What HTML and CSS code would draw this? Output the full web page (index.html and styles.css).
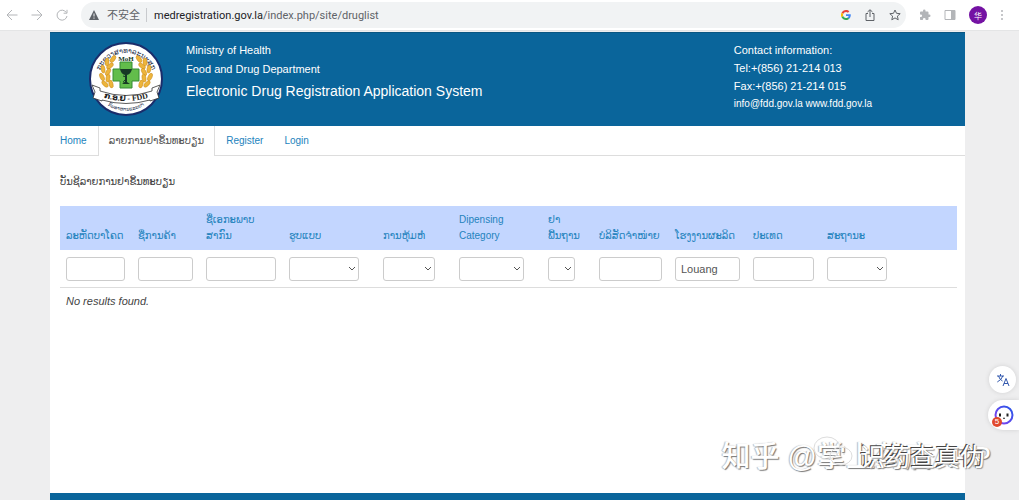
FILE: index.html
```html
<!DOCTYPE html>
<html lang="lo">
<head>
    <meta charset="UTF-8">
    <meta name="viewport" content="width=device-width, initial-scale=1.0">
    <title>ລາຍການຢາຂຶ້ນທະບຽນ</title>

    <link rel="stylesheet" href="styles.css">
</head>
<body>
    <div class="toolbar">
        <button class="tool" aria-label="Back"><svg width="12" height="12" viewBox="0 0 12 12"><path d="M11.500 6H1M6 1L1 6l5 5"/></svg></button>
        <button class="tool" aria-label="Forward"><svg width="12" height="12" viewBox="0 0 12 12"><path d="M.5 6H11M6 1l5 5-5 5"/></svg></button>
        <button class="tool" aria-label="Reload"><svg width="12" height="12" viewBox="0 0 12 12"><path d="M10.300 3.500A5 5 0 1 0 11 7M11 .8v3.400H7.600"/></svg></button>
        <div class="address">
            <svg class="warn" width="10" height="10" viewBox="0 0 10 10"><path d="M5 0l5 10H0z" fill="#5f6368"/><path d="M5 3.500v3M5 7.500v1.200" stroke="#f1f3f4"/></svg>
            <span class="unsafe" lang="zh">不安全</span>
            <span class="url"><b>medregistration.gov.la</b>/index.php/site/druglist</span>
            <svg class="google" width="10" height="10" viewBox="0 0 48 48">
                <path fill="#ea4335" d="M24 9.500c3.500 0 6.700 1.200 9.200 3.600l6.900-6.900C35.900 2.400 30.500 0 24 0 14.600 0 6.500 5.400 2.600 13.200l8 6.200C12.400 13.700 17.700 9.500 24 9.500z"/>
                <path fill="#4285f4" d="M47 24.500c0-1.600-.2-3.100-.4-4.500H24v9h12.900c-.6 3-2.300 5.500-4.700 7.200l7.700 6C44.400 38 47 31.800 47 24.500z"/>
                <path fill="#fbbc05" d="M10.500 28.600a14 14 0 0 1 0-9.200l-8-6.200a24 24 0 0 0 0 21.600z"/>
                <path fill="#34a853" d="M24 48c6.500 0 11.900-2.100 15.900-5.800l-7.700-6A14.500 14.500 0 0 1 10.500 28.600l-8 6.200C6.500 42.600 14.600 48 24 48z"/>
            </svg>
            <button class="tool dark" aria-label="Share"><svg width="12" height="12" viewBox="0 0 12 12"><path d="M4 4.500H2v7h8v-7H8M6 8V1M3.500 3L6 .7 8.500 3"/></svg></button>
            <button class="tool dark" aria-label="Bookmark"><svg width="12" height="12" viewBox="0 0 12 12"><path d="M6 1l1.500 3.300 3.700.4-2.800 2.400.8 3.700L6 8.900l-3.200 1.900.8-3.700L.8 4.700l3.700-.4z"/></svg></button>
        </div>
        <button class="tool" aria-label="Extensions"><svg width="12" height="12" viewBox="0 0 24 24"><path class="solid" d="M20.500 11H19V7a2 2 0 0 0-2-2h-4V3.500a2.500 2.500 0 0 0-5 0V5H4a2 2 0 0 0-2 2v3.800h1.500a2.700 2.700 0 0 1 0 5.400H2V20c0 1.100.9 2 2 2h3.800v-1.500a2.700 2.700 0 0 1 5.400 0V22H17a2 2 0 0 0 2-2v-4h1.500a2.500 2.500 0 0 0 0-5z"/></svg></button>
        <button class="tool" aria-label="Side panel"><svg width="12" height="12" viewBox="0 0 12 12"><path d="M1 1.500h10v9H1z"/><path class="solid" d="M7 1.500h4v9H7z"/></svg></button>
        <button class="avatar" lang="zh">华</button>
        <button class="tool menu" aria-label="Menu"><svg width="4" height="12" viewBox="0 0 4 12"><circle class="solid" cx="2" cy="2" r="1"/><circle class="solid" cx="2" cy="6" r="1"/><circle class="solid" cx="2" cy="10" r="1"/></svg></button>
    </div>

    <div class="app">
        <header class="header">
            <svg class="logo" width="76" height="76" viewBox="0 0 76 76">
                <defs>
                    <path id="arc-top" d="M10 40a28 28 0 0 1 56 0"/>
                    <path id="arc-bottom" d="M11 55a32 32 0 0 0 54 0"/>
                    <path id="ribbon" d="M13 56Q38 64 63 56"/>
                </defs>
                <circle cx="38" cy="38" r="36" fill="#fff" stroke="#1b2d6b" stroke-width="2"/>
                <text class="ring"><textPath href="#arc-top" startOffset="50%" text-anchor="middle">ກະຊວງສາທາລະນະສຸກ</textPath></text>
                <g fill="#edb53c" stroke="#c98a1c" stroke-width=".5">
                    <ellipse cx="25" cy="18" rx="2" ry="4" transform="rotate(35 25 18)"/>
                    <ellipse cx="19" cy="21" rx="2" ry="4" transform="rotate(5 19 21)"/>
                    <ellipse cx="22" cy="25" rx="2" ry="4" transform="rotate(50 22 25)"/>
                    <ellipse cx="15" cy="28" rx="2" ry="4" transform="rotate(-10 15 28)"/>
                    <ellipse cx="20" cy="31" rx="2" ry="4" transform="rotate(30 20 31)"/>
                    <ellipse cx="14" cy="36" rx="2" ry="4" transform="rotate(-25 14 36)"/>
                    <ellipse cx="20" cy="37" rx="2" ry="4" transform="rotate(10 20 37)"/>
                    <ellipse cx="17" cy="43" rx="2" ry="4" transform="rotate(-45 17 43)"/>
                    <ellipse cx="23" cy="43" rx="2" ry="4" transform="rotate(-15 23 43)"/>
                    <ellipse cx="51" cy="18" rx="2" ry="4" transform="rotate(-35 51 18)"/>
                    <ellipse cx="57" cy="21" rx="2" ry="4" transform="rotate(-5 57 21)"/>
                    <ellipse cx="54" cy="25" rx="2" ry="4" transform="rotate(-50 54 25)"/>
                    <ellipse cx="61" cy="28" rx="2" ry="4" transform="rotate(10 61 28)"/>
                    <ellipse cx="56" cy="31" rx="2" ry="4" transform="rotate(-30 56 31)"/>
                    <ellipse cx="62" cy="36" rx="2" ry="4" transform="rotate(25 62 36)"/>
                    <ellipse cx="56" cy="37" rx="2" ry="4" transform="rotate(-10 56 37)"/>
                    <ellipse cx="59" cy="43" rx="2" ry="4" transform="rotate(45 59 43)"/>
                    <ellipse cx="53" cy="43" rx="2" ry="4" transform="rotate(15 53 43)"/>
                </g>
                <path d="M32 21h12v7h7v12h-7v7H32v-7h-7V28h7z" fill="#62bd4b" stroke="#348b35"/>
                <path d="M32 28h12q-1 5-5 6v7l3 2h-8l3-2v-7q-4-1-5-6z" fill="#173b25"/>
                <path d="M35 35q6 1 2 4t2 3" fill="none" stroke="#173b25"/>
                <text class="moh" x="38" y="20" text-anchor="middle">MoH</text>
                <path d="M4 44l8 3v3q26 9 52 0v-3l8-3-3 7 2 6-9 3v-1q-24 7-48 0v1l-9-3 2-6z" fill="#fff" stroke="#333" stroke-width=".8"/>
                <text class="ribbon"><textPath href="#ribbon" startOffset="50%" text-anchor="middle">ກ.ອ.ຢ - FDD</textPath></text>
                <text class="ring low"><textPath href="#arc-bottom" startOffset="50%" text-anchor="middle">ກົມອາຫານແລະຢາ</textPath></text>
            </svg>
            <div class="titles">
                <p>Ministry of Health</p>
                <p>Food and Drug Department</p>
                <h1>Electronic Drug Registration Application System</h1>
            </div>
            <div class="contact">
                <p>Contact information:</p>
                <p>Tel:+(856) 21-214 013</p>
                <p>Fax:+(856) 21-214 015</p>
                <p class="mail">info@fdd.gov.la www.fdd.gov.la</p>
            </div>
        </header>

        <nav class="tabs">
            <a href="#">Home</a>
            <a href="#" class="active">ລາຍການຢາຂຶ້ນທະບຽນ</a>
            <a href="#">Register</a>
            <a href="#">Login</a>
        </nav>

        <main class="content">
            <h2>ບັນຊີລາຍການຢາຂຶ້ນທະບຽນ</h2>
            <table class="grid">
                <colgroup>
                    <col class="c-code"><col class="c-trade"><col class="c-generic"><col class="c-form"><col class="c-pack"><col class="c-category"><col class="c-basic"><col class="c-company"><col class="c-factory"><col class="c-country"><col class="c-status">
                </colgroup>
                <thead>
                    <tr>
                        <th><a href="#" id="h-code">ລະຫັດບາໂຄດ</a></th>
                        <th><a href="#" id="h-trade">ຊື່ການຄ້າ</a></th>
                        <th><a href="#" id="h-generic">ຊື່ເອກະພາບ<br>ສາກົນ</a></th>
                        <th><a href="#" id="h-form">ຮູບແບບ</a></th>
                        <th><a href="#" id="h-pack">ການຫຸ້ມຫໍ່</a></th>
                        <th><a href="#" id="h-category">Dipensing<br>Category</a></th>
                        <th><a href="#" id="h-basic">ຢາ<br>ພື້ນຖານ</a></th>
                        <th><a href="#" id="h-company">ບໍລິສັດຈຳໜ່າຍ</a></th>
                        <th><a href="#" id="h-factory">ໂຮງງານຜະລິດ</a></th>
                        <th><a href="#" id="h-country">ປະເທດ</a></th>
                        <th><a href="#" id="h-status">ສະຖານະ</a></th>
                    </tr>
                </thead>
                <tbody>
                    <tr class="filters">
                        <td><input type="text" aria-labelledby="h-code"></td>
                        <td><input type="text" aria-labelledby="h-trade"></td>
                        <td><input type="text" aria-labelledby="h-generic"></td>
                        <td class="pick"><select aria-labelledby="h-form"><option></option></select></td>
                        <td class="pick"><select aria-labelledby="h-pack"><option></option></select></td>
                        <td class="pick"><select aria-labelledby="h-category"><option></option></select></td>
                        <td class="pick"><select aria-labelledby="h-basic"><option></option></select></td>
                        <td><input type="text" aria-labelledby="h-company"></td>
                        <td><input type="text" aria-labelledby="h-factory" value="Louang"></td>
                        <td><input type="text" aria-labelledby="h-country"></td>
                        <td class="pick last"><select aria-labelledby="h-status"><option></option></select></td>
                    </tr>
                    <tr>
                        <td colspan="11" class="empty">No results found.</td>
                    </tr>
                </tbody>
            </table>
        </main>
        <footer class="footer"></footer>
    </div>

    <button class="float translate" aria-label="Translate">
        <svg width="14" height="14" viewBox="0 0 14 14"><path d="M1 3h7M4.500 1v2M2.500 3q1 3.500 4 5M6.800 3q-1 3.500-5.500 6M7 13l3-7.500L13 13M8 10.500h4"/></svg>
    </button>
    <button class="float helper" aria-label="Assistant">
        <svg width="20" height="20" viewBox="0 0 20 20">
            <defs><linearGradient id="face" x1="0" y1="1" x2="1" y2="0"><stop offset="0" stop-color="#8b3ff0"/><stop offset="1" stop-color="#2457e8"/></linearGradient></defs>
            <circle cx="10" cy="10" r="8.500" fill="#fff" stroke="url(#face)" stroke-width="2"/>
            <path d="M6 8.500v3M13.500 8.500v3" fill="none" stroke="#222" stroke-width="2"/>
            <path d="M9 13q1 1 2 0" fill="none" stroke="#222"/>
        </svg>
        <span class="badge">5</span>
    </button>

    <div class="marks" lang="zh">
        <span class="mark-zhihu">知乎 @掌上药店APP</span>
        <svg class="mark-chat" width="44" height="34" viewBox="0 0 44 34"><ellipse cx="16" cy="13" rx="13" ry="11"/><ellipse cx="30" cy="21" rx="11" ry="9"/><path d="M11 9v2M20 9v2M26 18v2M33 18v2"/></svg>
        <span class="mark-wechat">识药查真伪</span>
    </div>
</body>
</html>
```

FILE: styles.css
```css
*{
    padding: 0;
    margin: 0;
    box-sizing: border-box;
}

body {
    min-height: 100vh;
    display: flex;
    flex-direction: column;
    position: relative;
    background: #eeeeef;
    color: #444;
    font-family: "Liberation Sans", "DejaVu Sans", "Noto Sans CJK SC", sans-serif;
    font-size: 11px;
    overflow-x: hidden;
}

a {
    color: #2383bd;
    text-decoration: none;
}

button {
    border: 0;
    background: none;
    font-family: inherit;
}

/* 浏览器工具栏 */
.toolbar {
    height: 31px;
    display: flex;
    align-items: center;
    gap: 13px;
    padding: 0 15px 0 6px;
    background: #fff;
    border-bottom: 1px solid #e4e5e6;
}

.tool {
    display: flex;
    width: 12px;
}

.tool svg {
    fill: none;
    stroke: #b3b5b8;
}

.tool .solid {
    fill: #b3b5b8;
    stroke: none;
}

.tool.dark svg {
    stroke: #5f6368;
}

.tool.menu {
    width: 4px;
}

.address {
    flex: 1;
    height: 26px;
    display: flex;
    align-items: center;
    gap: 13px;
    padding: 0 5px 0 8px;
    border-radius: 13px;
    background: #f1f3f4;
    color: #5f6368;
}

.unsafe {
    margin-left: -5px;
    padding-right: 6px;
    border-right: 1px solid #c8cacd;
    line-height: 14px;
}

.url {
    flex: 1;
    margin-left: -6px;
    font-family: Roboto, sans-serif;
    font-size: 11px;
}

.url b {
    color: #202124;
    font-weight: 400;
}

.avatar {
    width: 18px;
    height: 18px;
    border-radius: 50%;
    background: #7412a3;
    color: #fff;
    font-size: 8px;
}

/* 页面主体 */
.app {
    flex: 1;
    display: flex;
    flex-direction: column;
    margin: 1px 54px 0 50px;
    background: #fff;
}

.header {
    display: flex;
    align-items: flex-start;
    padding: 8px 93px 9px 38px;
    border-top: 1px solid #0a5682;
    background: #0a659b;
    color: #fff;
}

.logo .ring {
    font-size: 7px;
    fill: #1b2d4b;
}

.logo .low {
    font-size: 5px;
}

.logo .moh {
    font: bold 7px "Liberation Serif", serif;
    fill: #173b25;
}

.logo .ribbon {
    font: bold 8px "Liberation Serif", "DejaVu Sans", serif;
    fill: #222;
}

.titles {
    flex: 1;
    margin-left: 22px;
}

.titles p {
    line-height: 19px;
}

.titles h1 {
    font-size: 14px;
    font-weight: 400;
    line-height: 25px;
}

.contact {
    line-height: 18px;
}

.contact .mail {
    font-size: 10px;
}

.tabs {
    height: 30px;
    display: flex;
    gap: 1px;
    border-bottom: 1px solid #ddd;
    font-size: 10px;
    line-height: 30px;
}

.tabs a {
    height: 30px;
    padding: 0 10px;
}

.tabs .active {
    border: 1px solid #ddd;
    border-width: 0 1px;
    background: #fff;
    color: #555;
}

.content {
    flex: 1;
    padding: 17px 8px 16px 10px;
}

.content h2 {
    margin-bottom: 15px;
    font-size: 10px;
    font-weight: 400;
    line-height: 18px;
}

.grid {
    width: 100%;
    table-layout: fixed;
    border-collapse: collapse;
}

.c-code { width: 72px; }
.c-trade { width: 68px; }
.c-generic { width: 83px; }
.c-form { width: 94px; }
.c-pack { width: 76px; }
.c-category { width: 89px; }
.c-basic { width: 51px; }
.c-company { width: 76px; }
.c-factory { width: 78px; }
.c-country { width: 74px; }
.c-status { width: 136px; }

.grid th {
    padding: 6px 0 6px 6px;
    background: #c3d6ff;
    font-size: 10px;
    font-weight: 400;
    line-height: 16px;
    text-align: left;
    vertical-align: bottom;
    white-space: nowrap;
}

.grid td {
    padding: 7px 7px 6px 6px;
}

.grid .pick {
    padding-right: 18px;
}

.grid .last {
    padding-right: 70px;
}

.filters {
    border-bottom: 1px solid #ddd;
}

.filters input,
.filters select {
    display: block;
    width: 100%;
    height: 24px;
    padding: 0 5px;
    border: 1px solid #ccc;
    border-radius: 3px;
    background: #fff;
    color: #555;
    font-family: inherit;
    font-size: 11px;
}

.filters select {
    appearance: none;
    background: #fff url("data:image/svg+xml,%3Csvg xmlns='http://www.w3.org/2000/svg' width='8' height='6'%3E%3Cpath d='M1 1l3 3 3-3' fill='none' stroke='%23555'/%3E%3C/svg%3E") no-repeat right 2px center;
}

.grid .empty {
    font-style: italic;
}

.footer {
    height: 7px;
    background: #0a659b;
}

/* 右侧悬浮按钮 */
.float {
    position: absolute;
    right: 0;
    display: flex;
    align-items: center;
    background: #fff;
    box-shadow: 0 0 5px rgba(0, 0, 0, .12);
}

.translate {
    top: 366px;
    right: 3px;
    width: 27px;
    height: 27px;
    justify-content: center;
    border-radius: 50%;
}

.translate svg {
    fill: none;
    stroke: #3157ad;
}

.helper {
    top: 400px;
    width: 31px;
    height: 30px;
    padding-left: 6px;
    border-radius: 15px 0 0 15px;
}

.badge {
    position: absolute;
    left: 4px;
    bottom: 3px;
    width: 10px;
    height: 10px;
    border-radius: 50%;
    background: #e1492e;
    color: #fff;
    font-size: 8px;
    line-height: 10px;
}

/* 水印 */
.marks {
    position: absolute;
    right: 28px;
    bottom: 21px;
    font-family: "Liberation Sans", "Noto Sans CJK SC", sans-serif;
    white-space: nowrap;
    pointer-events: none;
}

.mark-zhihu {
    color: #fff;
    font-size: 29px;
    font-weight: 500;
    line-height: 44px;
    text-shadow: 1px 1px 1px #777, -1px 0 1px #bbb;
}

.mark-chat {
    position: absolute;
    right: 136px;
    top: 0;
    fill: none;
    stroke: #ddd;
}

.mark-wechat {
    position: absolute;
    right: 6px;
    top: 0;
    color: #fff;
    font-size: 25px;
    line-height: 44px;
    text-shadow: -1px -1px 0 #444, 1px 1px 1px #999;
}
```
